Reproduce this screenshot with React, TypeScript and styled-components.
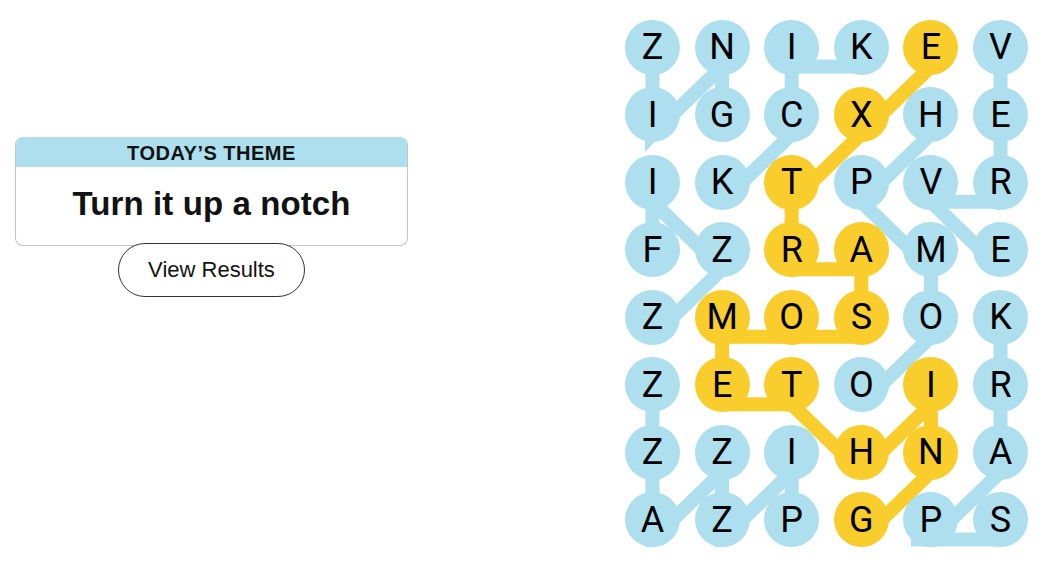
import React from "react";
import styled, { createGlobalStyle } from "styled-components";

const GlobalStyle = createGlobalStyle`
  body {
    margin: 0;
    background: #ffffff;
    font-family: "Liberation Sans", Arial, sans-serif;
  }
`;

const BLUE = "#aedfee";
const YELLOW = "#f8cd2c";

const CELL = 55;
const COL = 69.6;
const ROW = 67.57;
const OFF = 19;

const letters = [
  "ZNIKEV",
  "IGCXHE",
  "IKTPVR",
  "FZRAME",
  "ZMOSOK",
  "ZETOIR",
  "ZZIHNA",
  "AZPGPS",
];

type Cell = [number, number];

interface Word {
  cells: Cell[];
  spangram?: boolean;
}

const words: Word[] = [
  { cells: [[0, 0], [1, 0], [0, 1], [1, 1]] },
  { cells: [[2, 1], [1, 2], [0, 2], [0, 3]] },
  { cells: [[0, 5], [1, 5], [2, 5], [2, 4], [3, 5]] },
  { cells: [[5, 3], [4, 4], [3, 4], [2, 3], [1, 4]] },
  { cells: [[3, 0], [2, 0], [3, 1], [4, 0]] },
  { cells: [[7, 2], [6, 2], [7, 1], [6, 1], [7, 0], [6, 0], [5, 0]] },
  { cells: [[7, 5], [7, 4], [6, 5], [5, 5], [4, 5]] },
  {
    spangram: true,
    cells: [
      [0, 4], [1, 3], [2, 2], [3, 2], [3, 3], [4, 3], [4, 2],
      [4, 1], [5, 1], [5, 2], [6, 3], [5, 4], [6, 4], [7, 3],
    ],
  },
];

// little bubble tails poking out below some letters
const tails: Cell[] = [
  [1, 0],
  [7, 0],
  [7, 1],
];

const cx = (c: number) => CELL / 2 + c * COL;
const cy = (r: number) => CELL / 2 + r * ROW;

const spangramSet = new Set(
  words.filter((w) => w.spangram).flatMap((w) => w.cells.map(([r, c]) => `${r}-${c}`))
);

const Page = styled.main`
  display: flex;
  justify-content: space-between;
  align-items: flex-start;
  padding: 0 12px 0 15px;
  width: 1040px;
  box-sizing: border-box;
`;

const Sidebar = styled.section`
  width: 393px;
  padding-top: 137px;
  display: flex;
  flex-direction: column;
  align-items: center;
`;

const ThemeCard = styled.div`
  width: 100%;
  box-sizing: border-box;
  border: 1px solid #c4c4c4;
  border-top: none;
  border-radius: 8px;
  overflow: hidden;
  background: #fff;
`;

const ThemeLabel = styled.div`
  background: ${BLUE};
  height: 30px;
  line-height: 33px;
  text-align: center;
  font-size: 20px;
  font-weight: 700;
  text-transform: uppercase;
  color: #121212;
  letter-spacing: 0.5px;
`;

const ThemeText = styled.h1`
  margin: 0;
  height: 78px;
  padding-bottom: 5px;
  box-sizing: border-box;
  display: flex;
  align-items: center;
  justify-content: center;
  font-size: 33px;
  font-weight: 700;
  color: #121212;
  letter-spacing: 0.1px;
`;

const ResultsButton = styled.button`
  position: relative;
  z-index: 1;
  margin-top: -3px;
  width: 187px;
  height: 54px;
  border: 1px solid #333;
  border-radius: 27px;
  background: #fff;
  font-family: "Liberation Sans", Arial, sans-serif;
  font-size: 22px;
  color: #121212;
  padding: 0;
`;

const Board = styled.div`
  position: relative;
  margin-top: 19.5px;
  display: grid;
  grid-template-columns: repeat(6, ${CELL}px);
  column-gap: ${COL - CELL}px;
  row-gap: ${ROW - CELL}px;
`;

const Connectors = styled.svg`
  position: absolute;
  left: 0;
  top: 0;
  overflow: visible;
  z-index: 0;
`;

const Letter = styled.div<{ $spangram: boolean }>`
  position: relative;
  z-index: 1;
  width: ${CELL}px;
  height: ${CELL}px;
  border-radius: 50%;
  background: ${({ $spangram }) => ($spangram ? YELLOW : BLUE)};
  display: flex;
  align-items: center;
  justify-content: center;
  font-family: Roboto, "Liberation Sans", sans-serif;
  font-size: 36px;
  font-weight: 400;
  color: #000;
  line-height: 1;
`;

export default function App() {
  const width = cx(5) + CELL / 2;
  const height = cy(7) + CELL / 2;

  return (
    <>
      <GlobalStyle />
      <Page>
        <Sidebar>
          <ThemeCard>
            <ThemeLabel>Today’s Theme</ThemeLabel>
            <ThemeText>Turn it up a notch</ThemeText>
          </ThemeCard>
          <ResultsButton>View Results</ResultsButton>
        </Sidebar>

        <Board>
          <Connectors width={width} height={height}>
            {words.map((w, i) =>
              w.cells.slice(1).map(([r, c], j) => {
                const [pr, pc] = w.cells[j];
                return (
                  <line
                    key={`${i}-${j}`}
                    x1={cx(pc)}
                    y1={cy(pr) + OFF}
                    x2={cx(c)}
                    y2={cy(r) + OFF}
                    stroke={w.spangram ? YELLOW : BLUE}
                    strokeWidth={14}
                  />
                );
              })
            )}
            {tails.map(([r, c]) => {
              const x = cx(c);
              const y = cy(r);
              return (
                <polygon
                  key={`t${r}-${c}`}
                  points={`${x - 7.5},${y + 20} ${x - 7.5},${y + 37} ${x + 4},${y + 25}`}
                  fill={BLUE}
                />
              );
            })}
            <polygon
              points={`${cx(4) - 14},${cy(7) + 12} ${cx(4)},${cy(7) + 12} ${cx(4)},${cy(7) + 26} ${cx(4) - 20},${cy(7) + 26} ${cx(4) - 20},${cy(7) + 18}`}
              fill={BLUE}
            />
          </Connectors>
          {letters.map((row, r) =>
            row.split("").map((ch, c) => (
              <Letter key={`${r}-${c}`} $spangram={spangramSet.has(`${r}-${c}`)}>
                {ch}
              </Letter>
            ))
          )}
        </Board>
      </Page>
    </>
  );
}
